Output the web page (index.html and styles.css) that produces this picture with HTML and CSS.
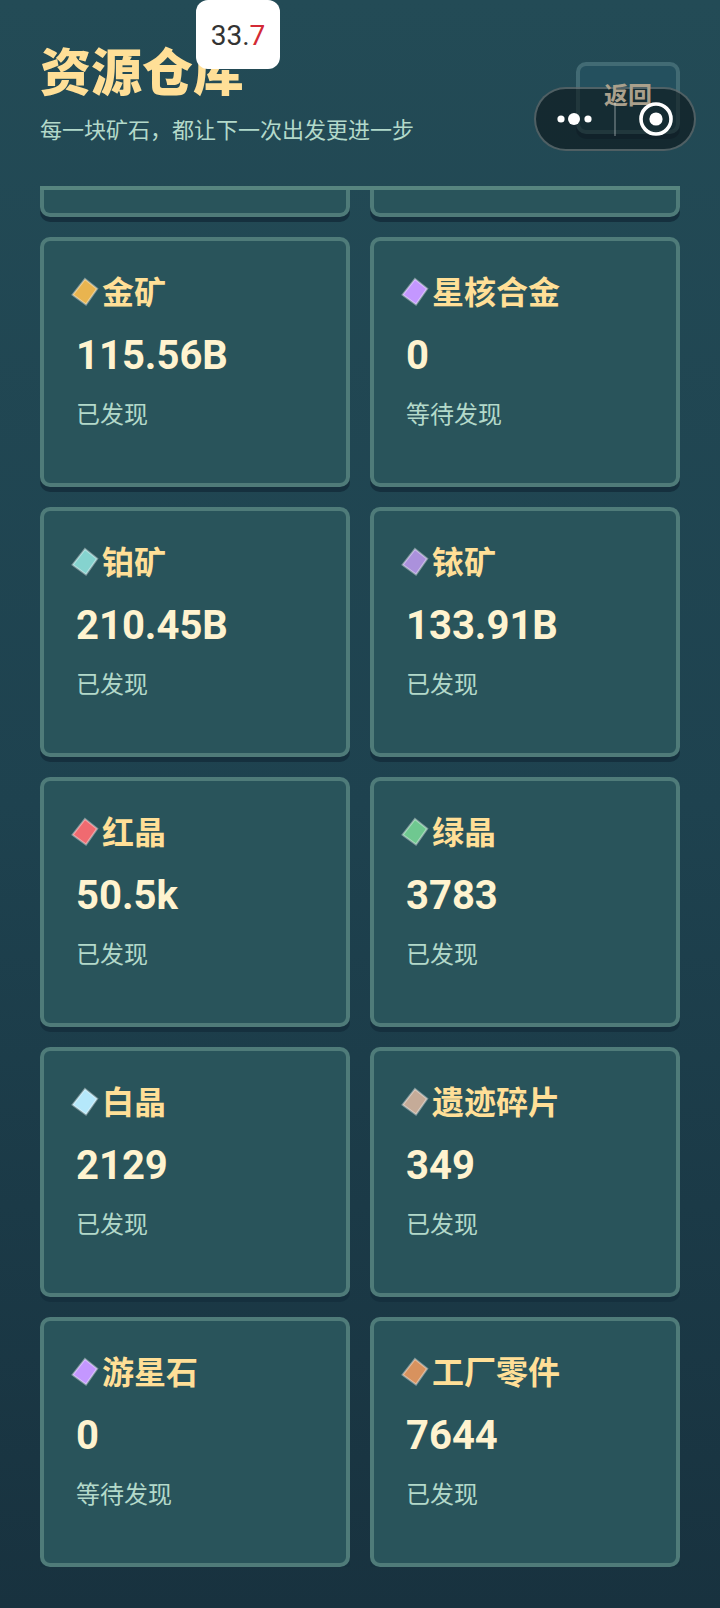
FILE: index.html
```html
<!DOCTYPE html>
<html lang="zh-CN">
<head>
    <meta charset="UTF-8">
    <meta name="viewport" content="width=device-width, initial-scale=1">
    <title>资源仓库</title>
    <link rel="stylesheet" href="styles.css">
</head>
<body>

<header class="header">
    <div class="heading">
        <h1>资源仓库</h1>
        <p class="subtitle">每一块矿石，都让下一次出发更进一步</p>
    </div>
    <button type="button" class="back"><span>返回</span></button>
</header>

<main class="list">
    <div class="card card-cut"></div>
    <div class="card card-cut"></div>

    <section class="card gold">
        <h2><svg class="gem" viewBox="0 0 32 32"><polygon points="15,2 27.2,11.7 16,27.5 2.6,17.8"/></svg>金矿</h2>
        <p class="amount">115.56B</p>
        <p class="status">已发现</p>
    </section>
    <section class="card violet">
        <h2><svg class="gem" viewBox="0 0 32 32"><polygon points="15,2 27.2,11.7 16,27.5 2.6,17.8"/></svg>星核合金</h2>
        <p class="amount">0</p>
        <p class="status">等待发现</p>
    </section>
    <section class="card platinum">
        <h2><svg class="gem" viewBox="0 0 32 32"><polygon points="15,2 27.2,11.7 16,27.5 2.6,17.8"/></svg>铂矿</h2>
        <p class="amount">210.45B</p>
        <p class="status">已发现</p>
    </section>
    <section class="card iridium">
        <h2><svg class="gem" viewBox="0 0 32 32"><polygon points="15,2 27.2,11.7 16,27.5 2.6,17.8"/></svg>铱矿</h2>
        <p class="amount">133.91B</p>
        <p class="status">已发现</p>
    </section>
    <section class="card red">
        <h2><svg class="gem" viewBox="0 0 32 32"><polygon points="15,2 27.2,11.7 16,27.5 2.6,17.8"/></svg>红晶</h2>
        <p class="amount">50.5k</p>
        <p class="status">已发现</p>
    </section>
    <section class="card green">
        <h2><svg class="gem" viewBox="0 0 32 32"><polygon points="15,2 27.2,11.7 16,27.5 2.6,17.8"/></svg>绿晶</h2>
        <p class="amount">3783</p>
        <p class="status">已发现</p>
    </section>
    <section class="card white">
        <h2><svg class="gem" viewBox="0 0 32 32"><polygon points="15,2 27.2,11.7 16,27.5 2.6,17.8"/></svg>白晶</h2>
        <p class="amount">2129</p>
        <p class="status">已发现</p>
    </section>
    <section class="card relic">
        <h2><svg class="gem" viewBox="0 0 32 32"><polygon points="15,2 27.2,11.7 16,27.5 2.6,17.8"/></svg>遗迹碎片</h2>
        <p class="amount">349</p>
        <p class="status">已发现</p>
    </section>
    <section class="card violet">
        <h2><svg class="gem" viewBox="0 0 32 32"><polygon points="15,2 27.2,11.7 16,27.5 2.6,17.8"/></svg>游星石</h2>
        <p class="amount">0</p>
        <p class="status">等待发现</p>
    </section>
    <section class="card copper">
        <h2><svg class="gem" viewBox="0 0 32 32"><polygon points="15,2 27.2,11.7 16,27.5 2.6,17.8"/></svg>工厂零件</h2>
        <p class="amount">7644</p>
        <p class="status">已发现</p>
    </section>
</main>

<div class="fps">33.<span>7</span></div>

<div class="capsule">
    <button type="button">
        <svg width="40" height="40" viewBox="0 0 40 40">
            <circle cx="6" cy="20" r="3.6"/>
            <circle cx="19" cy="20" r="6"/>
            <circle cx="33" cy="20" r="3.6"/>
        </svg>
    </button>
    <button type="button">
        <svg width="40" height="40" viewBox="0 0 40 40">
            <circle class="ring" cx="21" cy="20" r="15"/>
            <circle cx="21" cy="20" r="6.6"/>
        </svg>
    </button>
</div>

</body>
</html>
```

FILE: styles.css
```css
* {
    margin: 0;
    padding: 0;
    box-sizing: border-box;
}

body {
    position: relative;
    min-height: 100vh;
    padding: 42px 40px 41px;
    font-family: Roboto, 'Noto Sans CJK SC', sans-serif;
    background: linear-gradient(#234b56, #1e424f 50%, #18323f);
}

.header {
    display: flex;
    justify-content: space-between;
    align-items: flex-start;
    height: 144px;
}

h1 {
    font-size: 51px;
    font-weight: 900;
    line-height: 64px;
    color: #ffdf97;
}

.subtitle {
    margin-top: 9px;
    font-size: 22px;
    line-height: 32px;
    color: #b3d9ca;
}

.back {
    width: 104px;
    height: 72px;
    margin-top: 20px;
    font: inherit;
    font-size: 24px;
    font-weight: bold;
    line-height: 32px;
    padding-bottom: 4px;
    color: #aaa08c;
    background: #24505e;
    border: 4px solid #426b74;
    border-radius: 10px;
    box-shadow: 0 5px 0 #193848;
}

/* the label stays readable over the capsule */
.back span {
    position: relative;
    z-index: 1;
}

.list {
    display: grid;
    grid-template-columns: 1fr 1fr;
    gap: 20px;
    border-top: 4px solid #57857f;
    overflow: hidden;
}

.card {
    display: flex;
    flex-direction: column;
    gap: 20px;
    height: 250px;
    padding: 32px 26px;
    background: #29545b;
    border: 4px solid #4f7b79;
    border-radius: 10px;
    box-shadow: 0 5px 0 #15303e;
}

/* rest of the row scrolled under the header */
.card-cut {
    height: 27px;
    padding: 0;
    border-top: none;
    border-radius: 0 0 10px 10px;
}

h2 {
    display: flex;
    align-items: center;
    font-size: 32px;
    line-height: 40px;
    color: #ffdf97;
}

.gem {
    width: 32px;
    height: 32px;
    stroke: rgba(255, 255, 255, 0.4);
    stroke-width: 2;
}

.amount {
    padding-left: 6px;
    font-size: 40px;
    font-weight: bold;
    line-height: 46px;
    color: #fff3cf;
}

.status {
    padding-left: 6px;
    font-size: 24px;
    line-height: 32px;
    color: #b3d9ca;
}

.gold .gem { fill: #e9b44f; }
.violet .gem { fill: #c497ff; }
.platinum .gem { fill: #85d3cf; }
.iridium .gem { fill: #ab91dc; }
.red .gem { fill: #f06a70; }
.green .gem { fill: #6fc890; }
.white .gem { fill: #b5e8fb; }
.relic .gem { fill: #c5ab98; }
.copper .gem { fill: #d8925e; }

.fps {
    position: absolute;
    top: 0;
    left: 196px;
    z-index: 1;
    width: 84px;
    height: 69px;
    font-size: 28px;
    line-height: 72px;
    text-align: center;
    color: #333;
    background: #fff;
    border-radius: 12px;
}

.fps span {
    color: #d32a35;
}

.capsule {
    position: absolute;
    top: 87px;
    right: 24px;
    display: flex;
    align-items: center;
    width: 162px;
    height: 64px;
    background: rgba(12, 20, 24, 0.6);
    border: 2px solid rgba(255, 255, 255, 0.25);
    border-radius: 32px;
}

.capsule button {
    position: relative;
    z-index: 2;
    display: flex;
    flex: 1;
    justify-content: center;
    align-items: center;
    height: 34px;
    background: none;
    border: none;
}

.capsule button + button {
    border-left: 2px solid rgba(255, 255, 255, 0.25);
}

.capsule svg {
    flex: none;
    fill: #fff;
}

.capsule .ring {
    fill: none;
    stroke: #fff;
    stroke-width: 3.6;
}
```
